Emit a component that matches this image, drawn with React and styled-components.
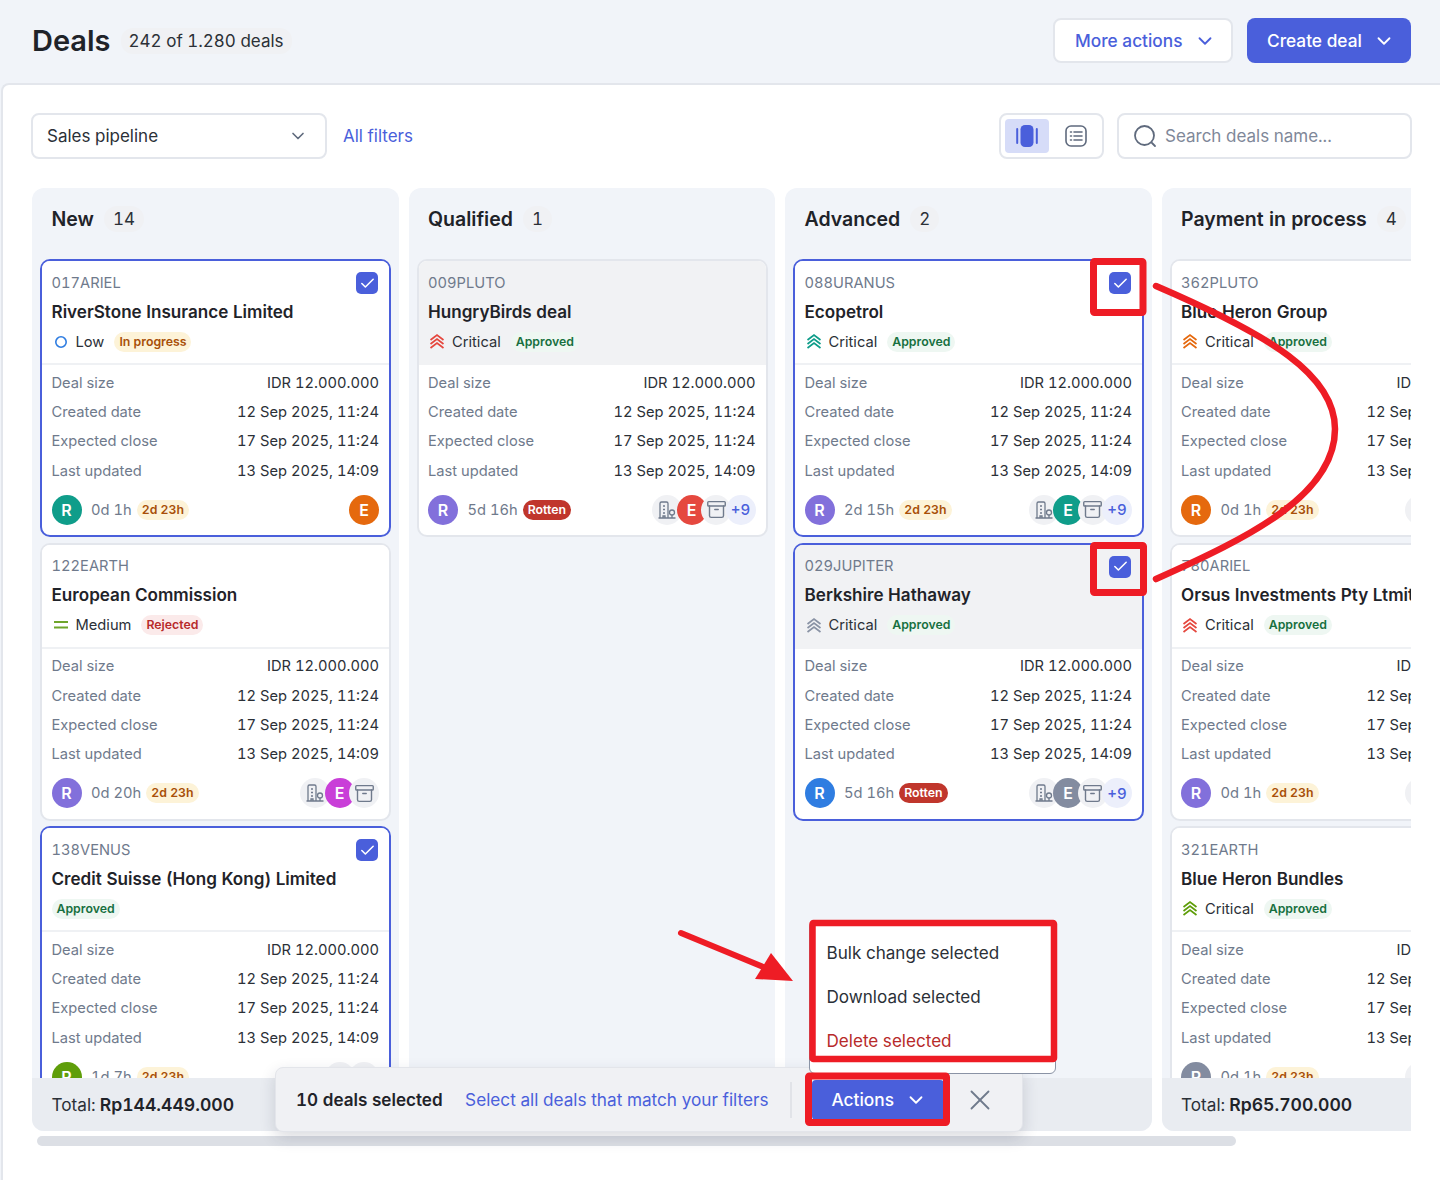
import React from 'react';
import styled, { createGlobalStyle } from 'styled-components';
import { Archive, Check, ChevronDown, X } from 'lucide-react';

const BLUE = '#4a5fdb';
const INK = '#1f2329';
const MUTED = '#6f7a8c';
const LINE = '#e3e6ec';

const GlobalStyle = createGlobalStyle`
  * { box-sizing: border-box; }
  html, body { margin: 0; padding: 0; }
  body {
    background: #f1f4f9;
    color: ${INK};
    font-family: Inter, "Liberation Sans", sans-serif;
    font-variant-numeric: tabular-nums;
  }
`;

const Page = styled.div`
  position: relative;
  width: 1440px;
  height: 1180px;
  overflow: hidden;
`;

const Header = styled.header`
  height: 83px;
  display: flex;
  align-items: center;
  padding: 0 29px 2px 32px;
`;

const Title = styled.h1`
  margin: 0;
  font-size: 29px;
  font-weight: 600;
  letter-spacing: 0;
`;

const CountPill = styled.span`
  margin-left: 10px;
  padding: 3px 8px;
  border-radius: 12px;
  background: #f0f1f4;
  font-size: 17px;
  font-weight: 400;
  line-height: 20px;
  color: #2b3037;
`;

const HeaderActions = styled.div`
  margin-left: auto;
  display: flex;
  gap: 14px;
`;

const Button = styled.button`
  height: 45px;
  width: ${p => p.$width}px;
  display: flex;
  align-items: center;
  justify-content: space-between;
  padding: 0 ${p => p.$padRight}px 0 ${p => p.$pad}px;
  border-radius: 8px;
  border: ${p => (p.$primary ? 'none' : `2px solid ${LINE}`)};
  background: ${p => (p.$primary ? BLUE : '#fff')};
  color: ${p => (p.$primary ? '#fff' : BLUE)};
  font: 500 17.3px Inter, sans-serif;
`;

const Panel = styled.main`
  height: 1097px;
  margin-left: 1px;
  padding: 28px 28px 0 29px;
  background: #fff;
  border-top: 2px solid ${LINE};
  border-left: 2px solid ${LINE};
  border-top-left-radius: 8px;
`;

const Toolbar = styled.div`
  height: 46px;
  display: flex;
  align-items: center;
`;

const Select = styled.div`
  margin-left: -1px;
  width: 296px;
  height: 46px;
  display: flex;
  align-items: center;
  justify-content: space-between;
  padding: 0 17px 0 14px;
  border: 2px solid ${LINE};
  border-radius: 8px;
  font-size: 17px;
  color: #2b3037;
`;

const FilterLink = styled.a`
  margin-left: 16px;
  font-size: 17px;
  color: ${BLUE};
`;

const ViewToggle = styled.div`
  margin-left: auto;
  width: 105px;
  height: 46px;
  display: flex;
  align-items: center;
  padding: 0 4px;
  gap: 5px;
  border: 2px solid ${LINE};
  border-radius: 8px;
`;

const ViewOption = styled.span`
  width: 44px;
  height: 34px;
  display: flex;
  align-items: center;
  justify-content: center;
  border-radius: 4px;
  background: ${p => (p.$active ? '#d6dcf8' : 'transparent')};
`;

const Search = styled.div`
  margin-left: 13px;
  width: 295px;
  height: 46px;
  display: flex;
  align-items: center;
  gap: 8px;
  padding: 0 15px 0 14px;
  border: 2px solid ${LINE};
  border-radius: 8px;
  font-size: 17px;
  color: #7f8899;
`;

const Board = styled.div`
  margin-top: 29px;
  width: 1379px;
  height: 943px;
  display: flex;
  gap: 10px;
  overflow: hidden;
`;

const Column = styled.section`
  flex: 0 0 366.5px;
  height: 100%;
  display: flex;
  flex-direction: column;
  border-radius: 12px;
  background: #f1f4f9;
  overflow: hidden;
`;

const ColumnHeader = styled.div`
  flex: 0 0 71px;
  display: flex;
  align-items: center;
  gap: 10px;
  padding: 0 20px 9px 19.5px;
`;

const ColumnTitle = styled.h2`
  margin: 0;
  font-size: 19.5px;
  font-weight: 600;
  white-space: nowrap;
`;

const ColumnCount = styled.span`
  padding: 3px 9px;
  border-radius: 13px;
  background: #f0f1f4;
  font-size: 17px;
  line-height: 20px;
  color: #2b3037;
`;

const ColumnBody = styled.div`
  flex: 1;
  min-height: 0;
  display: flex;
  flex-direction: column;
  gap: 5.500px;
  padding: 0 8px;
  overflow: hidden;
`;

const ColumnFooter = styled.div`
  flex: 0 0 53px;
  display: flex;
  align-items: center;
  gap: 4px;
  padding: 0 20px 0 19.5px;
  background: #e9ecf1;
  font-size: 17.2px;
  color: #2b3037;
  b { font-weight: 600; font-size: 17.6px; color: ${INK}; }
`;

const Card = styled.article`
  flex: 0 0 278px;
  width: 351px;
  border: 2px solid ${p => (p.$selected ? BLUE : LINE)};
  border-radius: 10px;
  background: #fff;
  overflow: hidden;
`;

const CardTop = styled.div`
  position: relative;
  height: 104px;
  padding: 11.500px 10px 0 9.500px;
  border-bottom: 2px solid ${p => (p.$shaded ? '#f1f2f4' : '#eff1f4')};
  background: ${p => (p.$shaded ? '#f1f2f4' : '#fff')};
`;

const DealCode = styled.div`
  height: 20px;
  font-size: 14.7px;
  line-height: 20px;
  color: ${MUTED};
`;

const DealName = styled.div`
  margin-top: 7px;
  height: 24px;
  font-size: 17.1px;
  font-weight: 600;
  line-height: 24px;
  white-space: nowrap;
`;

const TagRow = styled.div`
  margin-top: 7px;
  height: 22px;
  display: flex;
  align-items: center;
  font-size: 14.7px;
  color: #2b3037;
`;

const PriorityIcon = styled.span`
  width: 24px;
  display: flex;
  align-items: center;
  justify-content: flex-start;
  padding-left: 1px;
`;

const Tag = styled.span`
  margin-left: ${p => p.$gap ?? 9}px;
  padding: 0 5px;
  height: 20px;
  border-radius: 10px;
  background: ${p => p.$bg};
  color: ${p => p.$fg};
  font-size: 12.3px;
  font-weight: 600;
  line-height: 20px;
  white-space: nowrap;
`;

const CheckBox = styled.span`
  position: absolute;
  top: 11px;
  right: 11px;
  width: 22px;
  height: 22px;
  display: flex;
  align-items: center;
  justify-content: center;
  border-radius: 5px;
  background: ${BLUE};
  color: #fff;
`;

const Details = styled.dl`
  margin: 0;
  padding: 3px 10px 0 9.500px;
  display: grid;
  grid-template-columns: auto auto;
  grid-auto-rows: 29.4px;
  align-items: center;
  font-size: 14.7px;
  dt { color: ${MUTED}; }
  dd { margin: 0; text-align: right; color: #2b3037; white-space: nowrap; }
`;

const CardFooter = styled.div`
  margin-top: 9px;
  padding: 0 10px 0 9.500px;
  height: 30px;
  display: flex;
  align-items: center;
`;

const Avatar = styled.span`
  flex: none;
  width: 30px;
  height: 30px;
  display: flex;
  align-items: center;
  justify-content: center;
  border-radius: 50%;
  background: ${p => p.$bg};
  color: #fff;
  font-size: 16px;
  font-weight: 600;
`;

const Elapsed = styled.span`
  margin-left: 9.500px;
  font-size: 14.7px;
  color: ${MUTED};
  white-space: nowrap;
`;

const Stack = styled.div`
  margin-left: auto;
  display: flex;
  & > * + * { margin-left: -5.5px; }
`;

const StackIcon = styled.span`
  flex: none;
  width: 30px;
  height: 30px;
  display: flex;
  align-items: center;
  justify-content: center;
  border-radius: 50%;
  background: #f0f1f4;
  color: #6f7a8c;
`;

const MorePeople = styled(StackIcon)`
  background: #eceffb;
  color: ${BLUE};
  font-size: 15px;
  font-weight: 500;
`;

const Scrollbar = styled.div`
  margin: 5px 0 0 5px;
  width: 1199px;
  height: 10px;
  border-radius: 5px;
  background: #dcdfe5;
`;

const SelectionBar = styled.div`
  position: absolute;
  left: 275px;
  top: 1067px;
  width: 748px;
  height: 65px;
  display: flex;
  align-items: center;
  padding: 0 20px;
  border: 1px solid #e3e5ea;
  border-radius: 8px;
  background: #f0f1f4;
  box-shadow: 0 6px 16px rgba(30, 40, 60, 0.16);
`;

const SelectedCount = styled.span`
  font-size: 17.1px;
  font-weight: 600;
  white-space: nowrap;
`;

const SelectAll = styled.a`
  margin-left: 22.500px;
  font-size: 17.2px;
  color: ${BLUE};
  white-space: nowrap;
`;

const Divider = styled.span`
  margin-left: 22px;
  width: 2px;
  height: 36px;
  background: #e1e3e8;
`;

const ActionsWrap = styled.div`
  position: relative;
  margin-left: 20px;
`;

const ActionsButton = styled(Button)`
  height: 40px;
  border-radius: 4px;
`;

const Menu = styled.ul`
  position: absolute;
  left: -3px;
  bottom: 46px;
  width: 247px;
  height: 153px;
  margin: 0;
  padding: 9px 0 0;
  list-style: none;
  border: 1px solid #8a93a5;
  border-radius: 6px;
  background: #fff;
`;

const MenuItem = styled.li`
  height: 44px;
  padding-left: 16px;
  font-size: 17.1px;
  line-height: 44px;
  color: ${p => (p.$danger ? '#b72a2a' : '#2b3037')};
`;

const CloseButton = styled.span`
  margin-left: 19px;
  display: flex;
  color: #6f7a8c;
`;

const Annotations = styled.svg`
  position: absolute;
  left: 0;
  top: 0;
  pointer-events: none;
`;

const Chevrons = ({ color }) => (
  <svg width="16" height="17" viewBox="0 0 16 17" fill="none" stroke={color} strokeWidth="1.7">
    <path d="M1.5 7 8 2l6.500 5M1.500 11 8 6l6.500 5M1.500 15 8 10l6.500 5" />
  </svg>
);

const LowIcon = () => (
  <svg width="16" height="16" viewBox="0 0 16 16" fill="none" stroke="#2f7de1" strokeWidth="1.6">
    <circle cx="8" cy="8" r="5.200" />
  </svg>
);

const MediumIcon = () => (
  <svg width="16" height="16" viewBox="0 0 16 16" fill="none" stroke="#6fa52b" strokeWidth="2">
    <path d="M1 5h14M1 10.500h14" />
  </svg>
);

const BuildingIcon = () => (
  <svg width="20" height="20" viewBox="0 0 20 20" fill="none" stroke="currentColor" strokeWidth="1.3">
    <path d="M3 18V3.500A1.500 1.500 0 0 1 4.500 2h5A1.500 1.500 0 0 1 11 3.500V18M1.500 18h17M6 6h2M6 9.500h2M6 13h2M6 18v-2h2v2" />
    <circle cx="15" cy="12.500" r="2.500" />
    <path d="M15 15v3" />
  </svg>
);

const BoardIcon = () => (
  <svg width="24" height="24" viewBox="0 0 24 24" fill={BLUE}>
    <rect x="5.500" y="1" width="13" height="22" rx="4.500" />
    <path d="M2.200 5v14" stroke={BLUE} strokeWidth="2" strokeLinecap="round" />
    <path d="M21.800 5v14" stroke={BLUE} strokeWidth="2" strokeLinecap="round" />
  </svg>
);

const ListIcon = () => (
  <svg width="22" height="22" viewBox="0 0 22 22" fill="none" stroke="#5f6a7d" strokeWidth="1.600" strokeLinecap="round">
    <rect x="1" y="1" width="20" height="20" rx="5" />
    <path d="M5.500 7h1M9 7h8M5.500 11h1M9 11h8M5.500 15h1M9 15h8" />
  </svg>
);

const SearchIcon = () => (
  <svg width="24" height="24" viewBox="0 0 24 24" fill="none" stroke="#5f6a7d" strokeWidth="1.800" strokeLinecap="round">
    <circle cx="11.500" cy="11.500" r="9.500" />
    <path d="m19 19 3 3" />
  </svg>
);

const tags = {
  progress: { label: 'In progress', bg: '#fdf3d8', fg: '#a84f08' },
  approved: { label: 'Approved', bg: '#eef7f2', fg: '#17703f' },
  rejected: { label: 'Rejected', bg: '#fbeaea', fg: '#b72a2a' },
};

const timers = {
  due: { label: '2d 23h', bg: '#fdf3d8', fg: '#a84f08' },
  rotten: { label: 'Rotten', bg: '#c0362c', fg: '#fff' },
};

const colors = {
  teal: '#0f9d8a',
  purple: '#8270db',
  blue: '#2f7de1',
  orange: '#e5690e',
  red: '#e5483f',
  magenta: '#c93fd8',
  gray: '#838ca0',
  green: '#5f9e0a',
};

const columns = [
  {
    title: 'New',
    count: 14,
    total: 'Rp144.449.000',
    cards: [
      { code: '017ARIEL', name: 'RiverStone Insurance Limited', level: 'Low', icon: <LowIcon />, tag: 'progress', selected: true, checked: true, avatar: 'teal', time: '0d 1h', timer: 'due', owner: 'orange', solo: true },
      { code: '122EARTH', name: 'European Commission', level: 'Medium', icon: <MediumIcon />, tag: 'rejected', avatar: 'purple', time: '0d 20h', timer: 'due', owner: 'magenta', noMore: true },
      { code: '138VENUS', name: 'Credit Suisse (Hong Kong) Limited', tag: 'approved', selected: true, checked: true, avatar: 'green', time: '1d 7h', timer: 'due', noOwner: true, noMore: true },
    ],
  },
  {
    title: 'Qualified',
    count: 1,
    cards: [
      { code: '009PLUTO', name: 'HungryBirds deal', level: 'Critical', icon: <Chevrons color={colors.red} />, tag: 'approved', shaded: true, avatar: 'purple', time: '5d 16h', timer: 'rotten', owner: 'red' },
    ],
  },
  {
    title: 'Advanced',
    count: 2,
    cards: [
      { code: '088URANUS', name: 'Ecopetrol', level: 'Critical', icon: <Chevrons color={colors.teal} />, tag: 'approved', selected: true, checked: true, avatar: 'purple', time: '2d 15h', timer: 'due', owner: 'teal' },
      { code: '029JUPITER', name: 'Berkshire Hathaway', level: 'Critical', icon: <Chevrons color="#8a93a5" />, tag: 'approved', selected: true, checked: true, shaded: true, avatar: 'blue', time: '5d 16h', timer: 'rotten', owner: 'gray' },
    ],
  },
  {
    title: 'Payment in process',
    count: 4,
    total: 'Rp65.700.000',
    cards: [
      { code: '362PLUTO', name: 'Blue Heron Group', level: 'Critical', icon: <Chevrons color={colors.orange} />, tag: 'approved', avatar: 'orange', time: '0d 1h', timer: 'due', owner: 'teal' },
      { code: '780ARIEL', name: 'Orsus Investments Pty Ltmited', level: 'Critical', icon: <Chevrons color={colors.red} />, tag: 'approved', avatar: 'purple', time: '0d 1h', timer: 'due', owner: 'blue' },
      { code: '321EARTH', name: 'Blue Heron Bundles', level: 'Critical', icon: <Chevrons color={colors.green} />, tag: 'approved', avatar: 'gray', time: '0d 1h', timer: 'due', owner: 'red' },
    ],
  },
];

const detailRows = [
  ['Deal size', 'IDR 12.000.000'],
  ['Created date', '12 Sep 2025, 11:24'],
  ['Expected close', '17 Sep 2025, 11:24'],
  ['Last updated', '13 Sep 2025, 14:09'],
];

const DealCard = ({ deal }) => {
  const tag = tags[deal.tag];
  const timer = timers[deal.timer];
  return (
    <Card $selected={deal.selected}>
      <CardTop $shaded={deal.shaded}>
        <DealCode>{deal.code}</DealCode>
        <DealName>{deal.name}</DealName>
        <TagRow>
          {deal.icon && <PriorityIcon>{deal.icon}</PriorityIcon>}
          {deal.level}
          <Tag $bg={tag.bg} $fg={tag.fg} $gap={deal.level ? 10 : 0}>{tag.label}</Tag>
        </TagRow>
        {deal.checked && (
          <CheckBox><Check size={17} strokeWidth={2.2} /></CheckBox>
        )}
      </CardTop>
      <Details>
        {detailRows.map(([label, value]) => (
          <React.Fragment key={label}>
            <dt>{label}</dt>
            <dd>{value}</dd>
          </React.Fragment>
        ))}
      </Details>
      <CardFooter>
        <Avatar $bg={colors[deal.avatar]}>R</Avatar>
        <Elapsed>{deal.time}</Elapsed>
        <Tag $bg={timer.bg} $fg={timer.fg} $gap={5}>{timer.label}</Tag>
        <Stack>
          {deal.solo ? (
            <Avatar $bg={colors[deal.owner]}>E</Avatar>
          ) : (
            <>
              <StackIcon><BuildingIcon /></StackIcon>
              {!deal.noOwner && <Avatar $bg={colors[deal.owner]}>E</Avatar>}
              <StackIcon><Archive size={21} strokeWidth={1.6} /></StackIcon>
              {!deal.noMore && <MorePeople>+9</MorePeople>}
            </>
          )}
        </Stack>
      </CardFooter>
    </Card>
  );
};

export default function App() {
  return (
    <Page>
      <GlobalStyle />
      <Header>
        <Title>Deals</Title>
        <CountPill>242 of 1.280 deals</CountPill>
        <HeaderActions>
          <Button $width={180} $pad={20} $padRight={15}>More actions <ChevronDown size={22} /></Button>
          <Button $primary $width={164} $pad={20} $padRight={16}>Create deal <ChevronDown size={22} /></Button>
        </HeaderActions>
      </Header>
      <Panel>
        <Toolbar>
          <Select>Sales pipeline <ChevronDown size={20} color="#5f6a7d" /></Select>
          <FilterLink>All filters</FilterLink>
          <ViewToggle>
            <ViewOption $active><BoardIcon /></ViewOption>
            <ViewOption><ListIcon /></ViewOption>
          </ViewToggle>
          <Search><SearchIcon />Search deals name...</Search>
        </Toolbar>
        <Board>
          {columns.map(column => (
            <Column key={column.title}>
              <ColumnHeader>
                <ColumnTitle>{column.title}</ColumnTitle>
                <ColumnCount>{column.count}</ColumnCount>
              </ColumnHeader>
              <ColumnBody>
                {column.cards.map(deal => <DealCard key={deal.code} deal={deal} />)}
              </ColumnBody>
              <ColumnFooter>
                {column.total && <>Total: <b>{column.total}</b></>}
              </ColumnFooter>
            </Column>
          ))}
        </Board>
        <Scrollbar />
      </Panel>
      <SelectionBar>
        <SelectedCount>10 deals selected</SelectedCount>
        <SelectAll>Select all deals that match your filters</SelectAll>
        <Divider />
        <ActionsWrap>
          <Menu>
            <MenuItem>Bulk change selected</MenuItem>
            <MenuItem>Download selected</MenuItem>
            <MenuItem $danger>Delete selected</MenuItem>
          </Menu>
          <ActionsButton $primary $width={132} $pad={19} $padRight={17}>Actions <ChevronDown size={22} /></ActionsButton>
        </ActionsWrap>
        <CloseButton><X size={34} strokeWidth={1.3} /></CloseButton>
      </SelectionBar>
      <Annotations width="1440" height="1180" viewBox="0 0 1440 1180" fill="none" stroke="#ee1c25">
        <rect x="1093.500" y="261.500" width="49.500" height="51" strokeWidth="7" rx="1" />
        <rect x="1093.500" y="545.500" width="50" height="47" strokeWidth="7" rx="1" />
        <rect x="812.500" y="923" width="241.500" height="136" strokeWidth="6.500" rx="1" />
        <rect x="808.500" y="1076" width="138" height="46.500" strokeWidth="7" rx="1" />
        <path d="M1156 286C1270 335 1335 375 1335 429C1335 495 1250 537 1156 579" strokeWidth="6.500" strokeLinecap="round" />
        <path d="M681 933 768 969" strokeWidth="6" strokeLinecap="round" />
        <path d="M793 981 755 979 771 953Z" fill="#ee1c25" stroke="none" />
      </Annotations>
    </Page>
  );
}
